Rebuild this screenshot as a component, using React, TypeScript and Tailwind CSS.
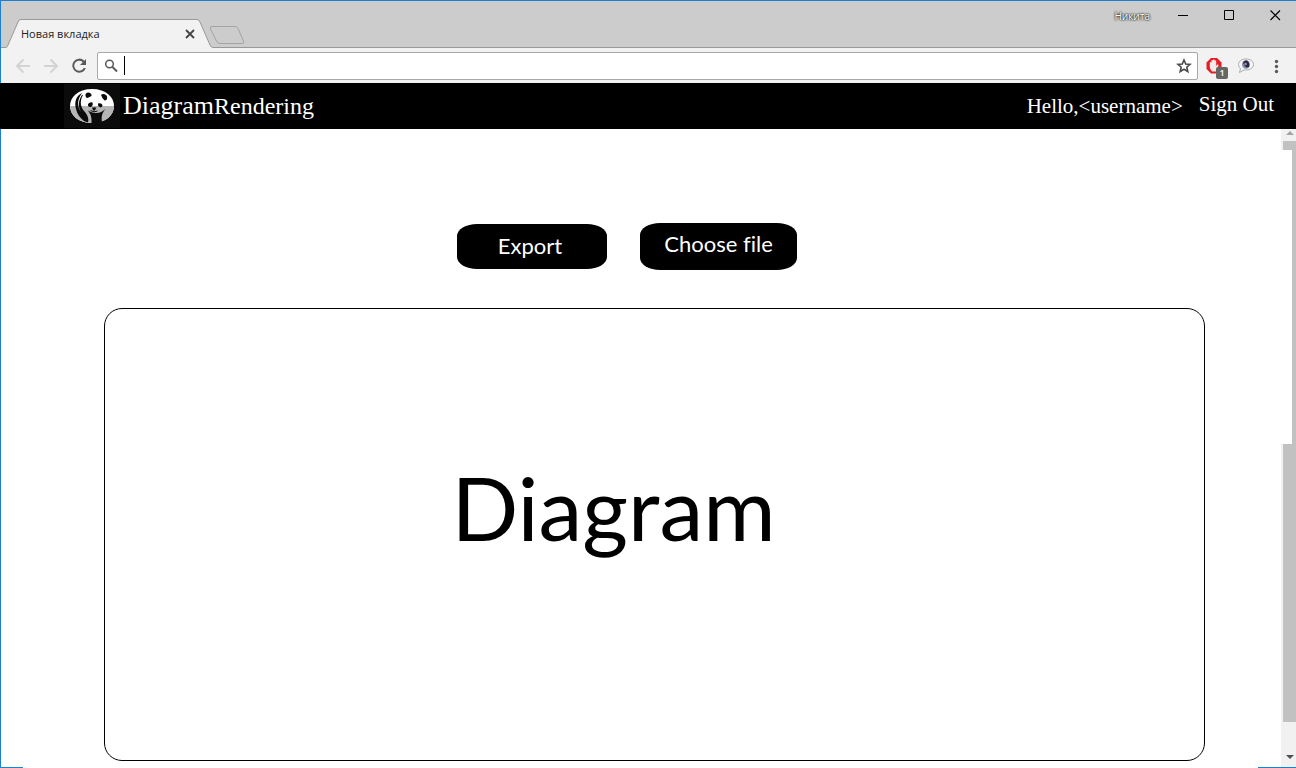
import React from 'react';

function TabStrip() {
  return (
    <div className="flex h-12 shrink-0 border-t border-[#1c7fd4] bg-[#cccccc] font-['Open_Sans','Noto_Sans',sans-serif]">
      <div className="relative flex grow items-end">
        <svg className="absolute top-0 left-0 h-[47px] w-[256px]" viewBox="1 0 256 47" aria-hidden="true">
          <path d="M0 47V46.500H6C7 46.500 7.400 45.500 8 44L18 21Q19 18.500 21 18.500H197Q199 18.500 200 21L210 44Q211 46.500 213 46.500H257V47Z" fill="#f2f2f2" />
          <path d="M0 46.500H6C7 46.500 7.400 45.500 8 44L18 21Q19 18.500 21 18.500H197Q199 18.500 200 21L210 44Q211 46.500 213 46.500H257" fill="none" stroke="#999" />
          <path d="M212 25.500H235Q237 25.500 238 27.500L243.500 40Q244.500 42.500 242.500 42.500H220Q217.500 42.500 216.500 40L210.500 28Q209.500 25.500 212 25.500Z" fill="#cccccc" stroke="#a3a3a3" />
        </svg>
        <div className="relative flex h-[28px] w-[194px] items-center justify-between pl-5">
          <span className="text-[11px] leading-4 text-[#222]">Новая вкладка</span>
          <button type="button" aria-label="Закрыть вкладку">
            <svg width="10" height="10" viewBox="0 0 10 10" fill="none" stroke="#444" strokeWidth="1.800"><path d="M1 1L9 9M9 1L1 9" /></svg>
          </button>
        </div>
        <div className="ml-[62px] h-px grow bg-[#999]" />
      </div>
      <div className="flex items-start border-b border-[#999]">
        <span className="mt-[7px] mr-5 text-[10px] leading-4 text-white [text-shadow:0_0_2px_#000,0_0_2px_#000]">Никита</span>
        <button type="button" aria-label="Свернуть" className="flex h-[28px] w-[26px] items-center justify-center">
          <svg width="11" height="11" viewBox="0 0 11 11" stroke="#000"><path d="M0 5.500H10" /></svg>
        </button>
        <button type="button" aria-label="Развернуть" className="ml-5 flex h-[28px] w-[26px] items-center justify-center">
          <svg width="11" height="11" viewBox="0 0 11 11" fill="none" stroke="#000"><path d="M.5.5H9.500V9.500H.5Z" /></svg>
        </button>
        <button type="button" aria-label="Закрыть" className="mr-2 ml-5 flex h-[28px] w-[26px] items-center justify-center">
          <svg width="11" height="11" viewBox="0 0 11 11" fill="none" stroke="#000" strokeWidth="1.100"><path d="M.5.5L10 10M10 .5L.5 10" /></svg>
        </button>
      </div>
    </div>
  );
}

function Toolbar() {
  return (
    <div className="flex h-[35px] shrink-0 items-center bg-[#f2f2f2] pl-3.5 font-['Open_Sans',sans-serif]">
      <button type="button" aria-label="Назад">
        <svg width="16" height="16" viewBox="0 0 16 16" fill="none" stroke="#d3d3d5" strokeWidth="2"><path d="M15 8H2.500M8.500 1.500L2 8L8.500 14.500" /></svg>
      </button>
      <button type="button" aria-label="Вперёд" className="ml-3">
        <svg width="16" height="16" viewBox="0 0 16 16" fill="none" stroke="#d3d3d5" strokeWidth="2"><path d="M1 8H13.500M7.500 1.500L14 8L7.500 14.500" /></svg>
      </button>
      <button type="button" aria-label="Обновить" className="ml-3">
        <svg width="16" height="16" viewBox="0 0 16 16" fill="#5a5a5c"><path d="M13.300 2.700A7 7 0 1 0 14.900 10H12.700A5 5 0 1 1 11.800 4.200L9 7H15V1Z" /></svg>
      </button>
      <div className="ml-2.5 flex h-7 grow items-center rounded-xs border border-[#a9a9a9] bg-white px-[7px]">
        <svg width="14" height="14" viewBox="0 0 14 14" fill="none" stroke="#5a5a5a"><circle cx="4.500" cy="5" r="3.800" strokeWidth="1.500" /><path d="M7.500 8L12 12.500" strokeWidth="2" /></svg>
        <span className="ml-[5px] h-[19px] w-px bg-black" />
        <input aria-label="Адресная строка" className="h-5 min-w-0 grow px-1 text-sm outline-none" />
        <button type="button" aria-label="Добавить в закладки" className="-mr-0.5">
          <svg width="16" height="16" viewBox="0 0 24 24" fill="none" stroke="#4a4a4a" strokeWidth="2.400"><path d="M12 3L14.600 9L21 9.600L16.200 13.900L17.700 20.300L12 16.900L6.300 20.300L7.800 13.900L3 9.600L9.400 9Z" /></svg>
        </button>
      </div>
      <button type="button" aria-label="Блокировщик рекламы" className="relative ml-[7px]">
        <svg width="18" height="18" viewBox="0 0 18 18"><path d="M6 1H12L16.500 5.500V12L12 16.500H6L1.500 12V5.500Z" fill="#e41e26" /><path d="M4.800 8V5.500Q5.700 4.500 6.400 5.500V3.500Q7.200 2.500 8 3.500V2.800Q8.800 2 9.500 2.800V3.600Q10.500 2.700 11.200 4V9L12.300 7.500Q13.700 7 13.500 8.500L11 14.500H7Q5 12.500 4.800 10Z" fill="#f2e9e9" /></svg>
        <span className="absolute top-[10px] left-[11px] h-3 w-3 rounded-xs bg-[#666] text-[9px] leading-3 font-semibold text-white">1</span>
      </button>
      <button type="button" aria-label="Сообщения" className="ml-3.5">
        <svg width="18" height="18" viewBox="0 0 18 18"><path d="M9 2C5 2 1.500 4 1.500 7.500Q1.500 10 3.500 11.500L2.500 15.500L7 12.900C12 13.500 16.500 11.500 16.500 7.500C16.500 4 13 2 9 2Z" fill="#f6f6f6" stroke="#aaa" /><ellipse cx="9" cy="7.500" rx="4" ry="4.300" fill="#8090b0" /><path d="M6 6Q6.500 3 9.500 3.500Q13 4.500 12 10L9.500 10.500Q7.500 9 6 6Z" fill="#262c4c" /><circle cx="8.500" cy="7" r="1.300" fill="#ad8b80" /></svg>
      </button>
      <button type="button" aria-label="Меню" className="mr-3 ml-[13px]">
        <svg width="16" height="16" viewBox="0 0 16 16" fill="#5a5a5a"><circle cx="8.500" cy="3.500" r="1.700" /><circle cx="8.500" cy="8.500" r="1.700" /><circle cx="8.500" cy="13.500" r="1.700" /></svg>
      </button>
    </div>
  );
}

function PandaLogo() {
  return (
    <svg width="56" height="44" viewBox="0 0 56 44" aria-hidden="true">
      <path d="M0 0H56V44H0Z" fill="#0b0b0b" />
      <path d="M28 5C14 5 6 13 6 22S14 39 28 39S50 31 50 22S42 5 28 5Z" fill="#fff" />
      <path d="M6.200 22H50C50 31 42 39 28 39S6 31 6.200 22Z" fill="#b5b5b5" />
      <path d="M18 9C12 12 10 18 12 25C13 30 16 34 20 37L24 38.500C25 35 24 32 21 28C17 24 15 18 19 11L18 11C14 17 14 23 17 28C14 24 12 17 18 9Z" fill="#0b0b0b" />
      <path d="M22 25C26 28 28 32 27.500 39H35L38 37.500C37 32 38.500 28 42 24.500C38 28 35 29.500 31 29C27 28.500 24 27 22 25Z" fill="#0b0b0b" />
      <path d="M21.500 12Q21 8.500 24.500 8.500Q28 9 27.500 12L23.500 14Q22 14 21.500 12ZM37 11Q39 9 42 11Q44 13 42.500 16L40.500 16.500Q38 14 37 11Z" fill="#0b0b0b" />
      <path d="M24 20Q26 17.500 28.500 18.500Q29.500 21 27 23Q23.500 23.500 24 20ZM34 19.500Q37.500 18.500 38.500 21Q38.500 24 35.500 23Q33.500 22 34 19.500ZM28 23.500H32.500L31 26H29Z" fill="#0b0b0b" />
      <path d="M30 25V27.500M26.500 26.500Q30 29 33.500 27" fill="none" stroke="#0b0b0b" />
    </svg>
  );
}

function SiteHeader() {
  return (
    <header className="flex h-[46px] shrink-0 items-center justify-between bg-black pr-[22px] pl-16 font-['Liberation_Serif',serif] text-white">
      <a href="#home" className="flex items-center">
        <PandaLogo />
        <span className="ml-[3px] flex items-baseline leading-8">
          <span className="text-[26px] leading-8">Diagram</span>
          <span className="text-2xl leading-8">Rendering</span>
        </span>
      </a>
      <nav className="flex items-center gap-4 text-[21px] leading-6">
        <span>Hello,&lt;username&gt;</span>
        <a href="#sign-out" className="pb-1">Sign Out</a>
      </nav>
    </header>
  );
}

function ScrollRail() {
  return (
    <div className="flex w-[15px] shrink-0 flex-col bg-white" aria-hidden="true">
      <div className="flex h-3 justify-center bg-[#f1f1f1] pt-0.5 pl-0.5">
        <svg width="8" height="5" viewBox="0 0 8 5"><path d="M0 4L4 0L8 4Z" fill="#a3a3a3" /></svg>
      </div>
      <div className="flex h-[9px] bg-[#f1f1f1] pl-0.5">
        <div className="grow bg-[#c1c1c1]" />
      </div>
      <div className="ml-[11px] h-[294px] bg-[#c1c1c1]" />
      <div className="flex grow flex-col bg-[#f1f1f1]">
        <div className="ml-0.5 grow bg-[#c1c1c1]" />
        <div className="flex h-[46px] items-end justify-center pb-2 pl-0.5">
          <svg width="8" height="5" viewBox="0 0 8 5"><path d="M0 0H8L4 4Z" fill="#505050" /></svg>
        </div>
      </div>
    </div>
  );
}

export default function App() {
  return (
    <div className="flex min-h-screen flex-col bg-white">
      <div className="flex flex-col border-l border-[#1c7fd4]">
        <TabStrip />
        <Toolbar />
      </div>
      <SiteHeader />
      <div className="flex grow border-l border-[#1c7fd4]">
        <main className="flex min-w-0 grow flex-col pt-[94px] pr-[76px] pb-[7px] pl-[103px] font-['Lato',sans-serif] [font-variant-ligatures:none]">
          <div className="flex items-center justify-center gap-[33px] pr-[55px]">
            <button type="button" className="h-[45px] w-[150px] rounded-[20px/12px] bg-black pr-1 pb-0.5 text-[22px] leading-7 text-white">Export</button>
            <button type="button" className="h-[47px] w-[157px] rounded-[20px/12px] bg-black pb-1.5 text-[22px] leading-7 text-white">Choose file</button>
          </div>
          <section className="mt-[38px] flex grow items-center justify-center rounded-[18px] border border-black pr-[82px] pb-[56px]">
            <h1 className="text-[88px] leading-[96px] text-black">Diagram</h1>
          </section>
        </main>
        <ScrollRail />
      </div>
      <div className="-mt-px flex h-px justify-between" aria-hidden="true">
        <span className="w-[23px] bg-[#1c7fd4]" />
        <span className="w-[38px] bg-[#1c7fd4]" />
      </div>
    </div>
  );
}
